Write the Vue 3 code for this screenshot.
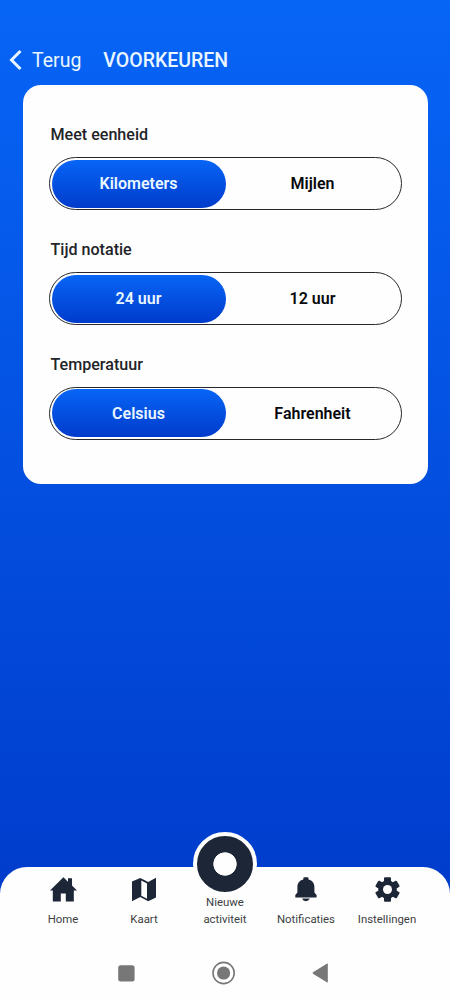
<script setup>
import { ref } from 'vue'

const settings = ref([
  { label: 'Meet eenheid', options: ['Kilometers', 'Mijlen'], selected: 'Kilometers' },
  { label: 'Tijd notatie', options: ['24 uur', '12 uur'], selected: '24 uur' },
  { label: 'Temperatuur', options: ['Celsius', 'Fahrenheit'], selected: 'Celsius' }
])

const select = (setting, option) => {
  setting.selected = option
}
</script>

<template>
  <main class="app">
    <header class="header">
      <button class="back">
        <svg width="13" height="22" viewBox="0 0 13 22">
          <path d="M11.5 2 L2.5 11 L11.5 20" fill="none" stroke="currentColor" stroke-width="3" />
        </svg>
        <span>Terug</span>
      </button>
      <h1 class="title">VOORKEUREN</h1>
    </header>

    <section class="card">
      <div v-for="setting in settings" :key="setting.label" class="setting">
        <h2 class="label">{{ setting.label }}</h2>
        <div class="toggle">
          <button
            v-for="option in setting.options"
            :key="option"
            class="option"
            :class="{ active: setting.selected === option }"
            @click="select(setting, option)"
          >{{ option }}</button>
        </div>
      </div>
    </section>

    <footer class="bottom">
      <nav class="nav">
        <a class="nav-item">
          <svg width="27" height="25" viewBox="0 0 27 25">
            <path d="M13.4 .3 L18 4.7 V1.3 H22 V8.5 L27 13.6 H23.8 V24.6 H15.8 V16.5 H10.8 V24.6 H2.8 V13.6 H0 Z" />
          </svg>
          <span>Home</span>
        </a>
        <a class="nav-item">
          <svg width="24" height="25" viewBox="0 0 24 25">
            <path fill-rule="evenodd" d="M0 4.5 L8.3 .9 L16.2 5 L24 .8 V20.4 L16.2 24.3 L8.3 20 L0 24.3 Z M9.3 3.6 V18.8 L15 21.7 V6.5 Z" />
          </svg>
          <span>Kaart</span>
        </a>
        <a class="nav-item main">
          <i class="record"></i>
          <span>Nieuwe<br>activiteit</span>
        </a>
        <a class="nav-item">
          <svg width="22" height="25" viewBox="0 0 22 25">
            <path d="M8.3 1.4 Q8.3 .2 9.5 .2 H12.3 Q13.5 .2 13.5 1.4 V2.4 C17.6 3.4 19.4 6.4 19.4 10 V15.6 L21.6 18 V20.4 H.3 V18 L2.4 15.6 V10 C2.4 6.4 4.2 3.4 8.3 2.4 Z" />
            <path d="M7 21.6 H14.8 Q13.7 24.2 10.9 24.2 Q8.1 24.2 7 21.6 Z" />
          </svg>
          <span>Notificaties</span>
        </a>
        <a class="nav-item">
          <svg width="25" height="25" viewBox="0 0 25 25">
            <circle cx="12.5" cy="12.5" r="9.3" />
            <rect
              v-for="angle in [0, 60, 120]"
              :key="angle"
              x="9" y=".2" width="7" height="24.6" rx="1"
              :transform="`rotate(${angle} 12.5 12.5)`"
            />
            <circle class="hole" cx="12.5" cy="12.5" r="4.5" />
          </svg>
          <span>Instellingen</span>
        </a>
      </nav>

      <div class="system">
        <svg width="17" height="17" viewBox="0 0 17 17">
          <rect x=".2" y=".2" width="16.4" height="16.4" rx="2.5" />
        </svg>
        <svg width="24" height="24" viewBox="0 0 24 24">
          <circle cx="11.6" cy="12" r="10.6" fill="none" stroke="#777" stroke-width="1.6" />
          <circle cx="11.6" cy="12" r="6.6" />
        </svg>
        <svg width="17" height="20" viewBox="0 0 17 20">
          <path d="M1 9.3 Q.3 10 1 10.7 L14.8 19.3 Q15.8 19.7 15.8 18.7 V1.3 Q15.8 .3 14.8 .7 Z" />
        </svg>
      </div>
    </footer>
  </main>
</template>

<style>
body {
  margin: 0;
}
</style>

<style scoped>
.app {
  height: 1000px;
  display: flex;
  flex-direction: column;
  background: linear-gradient(#0765f6, #003bcb 920px);
  font-family: Roboto, sans-serif;
  overflow: hidden;
}

button {
  border: none;
  background: none;
  padding: 0;
  font-family: inherit;
}

.header {
  box-sizing: border-box;
  height: 85px;
  padding: 35px 0 0 9px;
  display: flex;
  align-items: center;
  gap: 22px;
  color: #e9f6ff;
}

.back {
  display: flex;
  align-items: center;
  gap: 10px;
  color: inherit;
  font-size: 19.5px;
}

.title {
  margin: 0;
  padding-top: 2px;
  font-size: 19.5px;
  line-height: 24px;
  font-weight: 500;
}

.card {
  box-sizing: border-box;
  width: 404.5px;
  height: 399.4px;
  margin-left: 23px;
  padding: 39.4px 25.5px 0 26px;
  border-radius: 18px;
  background: #fefefe;
}

.setting {
  height: 114.7px;
}

.label {
  margin: 0 0 11px 1.5px;
  font-size: 16.1px;
  line-height: 22px;
  font-weight: 500;
  color: #222429;
}

.toggle {
  box-sizing: border-box;
  display: flex;
  height: 53px;
  padding: 1.5px;
  border: 1.3px solid #25272b;
  border-radius: 27px;
}

.option {
  flex: 1;
  border-radius: 25px;
  font-size: 16px;
  font-weight: 600;
  color: #08090c;
}

.option.active {
  background: linear-gradient(#0765f6, #003bcb);
  color: #eaf6ff;
}

.bottom {
  box-sizing: border-box;
  height: 133px;
  margin-top: auto;
  padding-top: 10px;
  border-radius: 27px 27px 0 0;
  background: #fefefe;
}

.nav {
  display: flex;
  height: 78px;
  padding: 0 22.5px;
}

.nav-item {
  flex: 1;
  display: flex;
  flex-direction: column;
  align-items: center;
  gap: 9px;
  font-size: 11.4px;
  line-height: 17px;
  text-align: center;
  color: #3d3f43;
}

.nav-item svg {
  fill: #1d2636;
}

.nav-item .hole {
  fill: #fefefe;
}

.main {
  margin-top: -45px;
  gap: 0;
}

/* ring in the middle of the bar, rises above its top edge */
.record {
  box-sizing: border-box;
  flex: none;
  width: 64px;
  height: 64px;
  margin-bottom: -2px;
  border: 4.5px solid #fefefe;
  border-radius: 50%;
  background: radial-gradient(circle, #fefefe 11.3px, #1d2636 12px);
}

.system {
  display: flex;
  align-items: center;
  justify-content: space-between;
  height: 36px;
  padding: 0 121px 0 118px;
}

.system svg {
  fill: #777;
}
</style>
